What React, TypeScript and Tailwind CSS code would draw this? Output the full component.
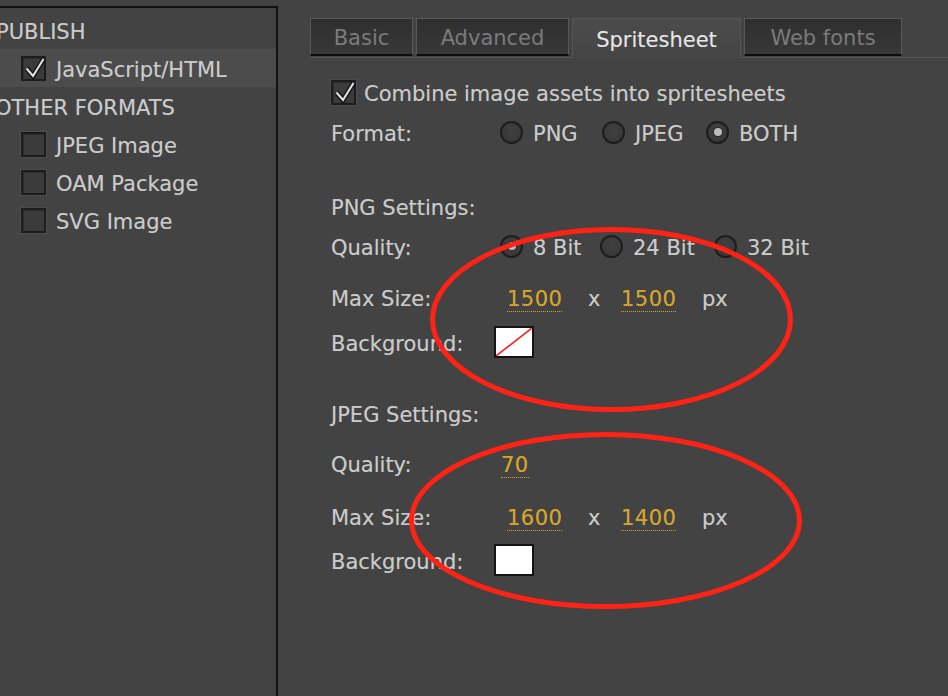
import React from "react";

const FONT = "font-['DejaVu_Sans','Liberation_Sans',sans-serif]";
// DejaVu sits a little high against the mac font, nudge text down
const TX = "pt-[5px]";

function Check({ checked }: { checked?: boolean }) {
  return (
    <span className="relative inline-block w-[25px] h-[25px] shrink-0 border-2 border-[#1c1c1c] bg-[#3b3b3b] shadow-[0_0_0_1px_#4d4d4d,inset_1px_1px_0_#2e2e2e]">
      {checked && (
        <svg className="absolute left-[0px] top-[-3px]" width="24" height="26" viewBox="0 0 24 26">
          <path d="M3.5 13.5 L10 21 L20.5 4" stroke="#141414" strokeWidth="5" fill="none" strokeLinejoin="miter" />
          <path d="M3.5 13.5 L10 21 L20.5 4" stroke="#dedede" strokeWidth="2.2" fill="none" strokeLinejoin="miter" />
        </svg>
      )}
    </span>
  );
}

function Radio({ on }: { on?: boolean }) {
  return (
    <span className="inline-flex items-center justify-center w-[23px] h-[23px] shrink-0 rounded-full border-2 border-[#1d1d1d] bg-[radial-gradient(circle_at_50%_40%,#414141,#353535)]">
      {on && <span className="w-[8px] h-[8px] rounded-full bg-[#bdbdbd] shadow-[0_0_0_1px_#2a2a2a]" />}
    </span>
  );
}

function Opt({ label, on, w }: { label: string; on?: boolean; w: string }) {
  return (
    <div className={`flex items-center gap-[10px] ${w}`}>
      <Radio on={on} />
      <span className={TX}>{label}</span>
    </div>
  );
}

function Val({ v }: { v: string }) {
  return (
    <span className="text-[#d9a321] border-b border-dotted border-[#d9a321] leading-[22px] tracking-[0.5px]">{v}</span>
  );
}

function Row({ label, className, children }: { label: string; className?: string; children?: React.ReactNode }) {
  return (
    <div className={`flex items-center h-[40px] ${className ?? ""}`}>
      <span className={`w-[169px] shrink-0 ${TX}`}>{label}</span>
      {children}
    </div>
  );
}

function SizeRow({ a, b, className }: { a: string; b: string; className: string }) {
  return (
    <Row label="Max Size:" className={className}>
      <div className={`flex items-center pl-[7px] ${TX}`}>
        <span className="w-[81px]"><Val v={a} /></span>
        <span className="w-[33px]">x</span>
        <span className="w-[81px]"><Val v={b} /></span>
        <span>px</span>
      </div>
    </Row>
  );
}

function Swatch({ none }: { none?: boolean }) {
  return (
    <span className="relative block w-[40px] h-[32px] border-2 border-[#141414] bg-white -ml-[6px]">
      {none && (
        <svg className="absolute inset-0" width="36" height="28" viewBox="0 0 36 28">
          <line x1="0" y1="28" x2="36" y2="0" stroke="#ff1a1a" strokeWidth="1.6" />
        </svg>
      )}
    </span>
  );
}

const tabs = [
  { name: "Basic", w: "w-[103px]" },
  { name: "Advanced", w: "w-[153px]" },
  { name: "Spritesheet", w: "w-[169px]", active: true },
  { name: "Web fonts", w: "w-[158px]" },
];

export default function App() {
  return (
    <div className={`relative w-[948px] h-[696px] overflow-hidden bg-[#434343] text-[#cacaca] text-[21px] ${FONT} flex [text-shadow:0_0_0.5px_rgba(210,210,210,0.5)]`}>
      <aside className="w-[278px] shrink-0 mt-[6px] border-t-2 border-r-2 border-[#121212] pt-[3px] flex flex-col">
        <div className={`h-[38px] flex items-center -ml-[4px] ${TX}`}>PUBLISH</div>
        <div className="h-[38px] flex items-center gap-[10px] pl-[21px] bg-[#4c4c4c]">
          <Check checked />
          <span className={TX}>JavaScript/HTML</span>
        </div>
        <div className={`h-[38px] flex items-center -ml-[5px] ${TX}`}>OTHER FORMATS</div>
        {["JPEG Image", "OAM Package", "SVG Image"].map((t) => (
          <div key={t} className="h-[38px] flex items-center gap-[10px] pl-[21px]">
            <Check />
            <span className={TX}>{t}</span>
          </div>
        ))}
      </aside>

      <main className="flex-1 flex flex-col pt-[18px] pl-[32px]">
        <div className="flex items-end gap-[3px] h-[40px] border-b border-[#565656]">
          {tabs.map((t) =>
            t.active ? (
              <div
                key={t.name}
                className={`${t.w} h-[40px] -mb-px flex items-center justify-center pt-[5px] border border-b-0 border-[#555] bg-[linear-gradient(#4c4c4c,#444)] text-[#e4e4e4]`}
              >
                {t.name}
              </div>
            ) : (
              <div
                key={t.name}
                className={`${t.w} h-[38px] mb-px flex items-center justify-center pt-[5px] border border-[#575757] border-b-2 border-b-[#0d0d0d] bg-[linear-gradient(#2f2f2f,#383838)] text-[#7b7b7b] [text-shadow:none]`}
              >
                {t.name}
              </div>
            )
          )}
        </div>

        <div className="pl-[21px] flex flex-col">
          <div className="flex items-center gap-[8px] h-[40px] mt-[14px]">
            <Check checked />
            <span className={TX}>Combine image assets into spritesheets</span>
          </div>
          <Row label="Format:">
            <Opt label="PNG" w="w-[102px]" />
            <Opt label="JPEG" w="w-[104px]" />
            <Opt label="BOTH" w="w-auto" on />
          </Row>

          <Row label="PNG Settings:" className="mt-[34px]" />
          <Row label="Quality:">
            <Opt label="8 Bit" w="w-[100px]" on />
            <Opt label="24 Bit" w="w-[114px]" />
            <Opt label="32 Bit" w="w-auto" />
          </Row>
          <SizeRow a="1500" b="1500" className="mt-[11px]" />
          <Row label="Background:" className="mt-[5px]">
            <Swatch none />
          </Row>

          <Row label="JPEG Settings:" className="mt-[31px]" />
          <Row label="Quality:" className="mt-[10px]">
            <span className={`pl-[1px] ${TX}`}><Val v="70" /></span>
          </Row>
          <SizeRow a="1600" b="1400" className="mt-[13px]" />
          <Row label="Background:" className="mt-[4px]">
            <Swatch />
          </Row>
        </div>
      </main>

      <svg className="absolute inset-0 pointer-events-none" width="948" height="696" viewBox="0 0 948 696">
        <ellipse cx="611.5" cy="319.5" rx="179" ry="90" fill="none" stroke="#ff2316" strokeWidth="5" />
        <ellipse cx="605.5" cy="520.5" rx="194" ry="86" fill="none" stroke="#ff2316" strokeWidth="5" />
      </svg>
    </div>
  );
}
